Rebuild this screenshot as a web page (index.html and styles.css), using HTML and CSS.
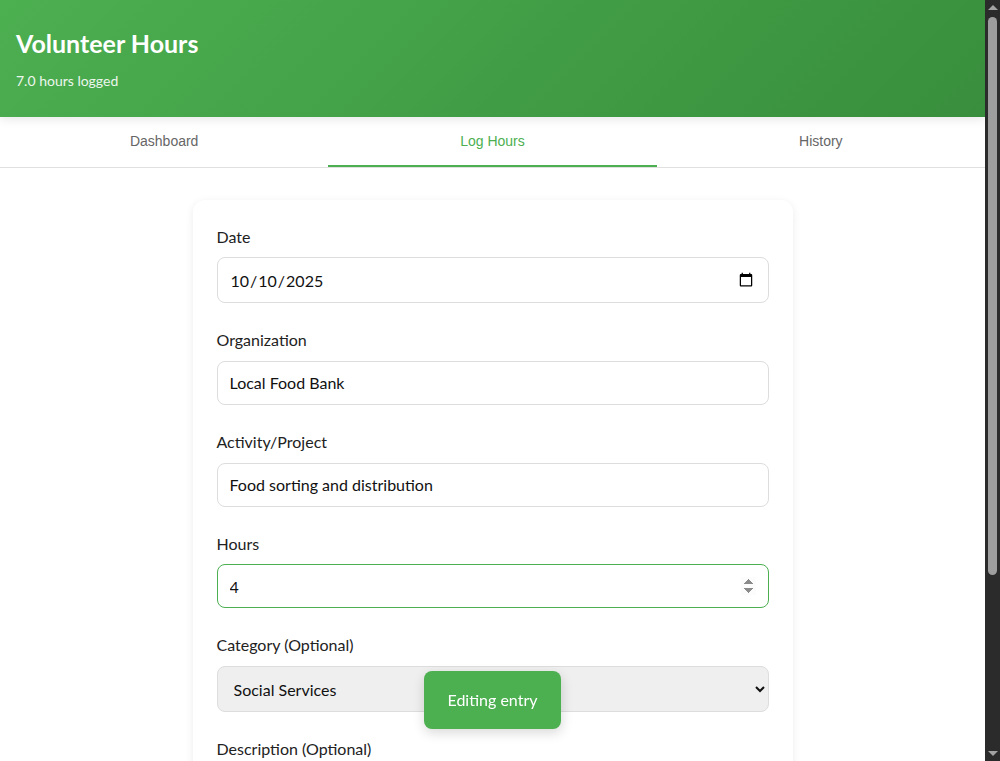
FILE: index.html
```html
<!DOCTYPE html>
<html lang="en">
<head>
<meta charset="utf-8">
<title>Volunteer Hours</title>
<link rel="stylesheet" href="styles.css">
</head>
<body>
<div class="page">
  <header class="app-header">
    <h1 class="app-title">Volunteer Hours</h1>
    <p class="app-subtitle">7.0 hours logged</p>
  </header>
  <nav class="tabs">
    <button class="tab">Dashboard</button>
    <button class="tab active">Log Hours</button>
    <button class="tab">History</button>
  </nav>
  <main class="main">
    <form class="card">
      <div class="form-group">
        <label class="label" for="date">Date</label>
        <input class="field field-date" type="date" id="date" value="2025-10-10">
      </div>
      <div class="form-group">
        <label class="label" for="org">Organization</label>
        <input class="field" type="text" id="org" value="Local Food Bank">
      </div>
      <div class="form-group">
        <label class="label" for="act">Activity/Project</label>
        <input class="field" type="text" id="act" value="Food sorting and distribution">
      </div>
      <div class="form-group">
        <label class="label" for="hours">Hours</label>
        <input class="field" type="number" id="hours" value="4" step="0.5" autofocus>
      </div>
      <div class="form-group">
        <label class="label" for="cat">Category (Optional)</label>
        <select class="field field-select" id="cat">
          <option>Social Services</option>
          <option>Education</option>
          <option>Environment</option>
        </select>
      </div>
      <div class="form-group">
        <label class="label" for="desc">Description (Optional)</label>
        <textarea class="field field-area" id="desc"></textarea>
      </div>
      <button class="submit" type="button">Update Entry</button>
    </form>
  </main>
</div>
<div class="toast">Editing entry</div>
<div class="scrollbar" aria-hidden="true">
  <span class="sb-arrow sb-up"></span>
  <span class="sb-thumb"></span>
  <span class="sb-arrow sb-down"></span>
</div>
</body>
</html>
```
FILE: styles.css
```css
* { box-sizing: border-box; }
html, body { margin: 0; padding: 0; }
body {
  font-family: Lato, "Open Sans", sans-serif;
  line-height: 1.6;
  color: #333;
  background: #fff;
}
.page {
  margin-right: 15px;
}
.app-header {
  position: relative;
  z-index: 2;
  background: linear-gradient(135deg, #4CAF50 0%, #388E3C 100%);
  color: #fff;
  padding: 24px 16px;
  box-shadow: 0 2px 10px rgba(0,0,0,0.1);
}
.app-title {
  margin: 0 0 8px;
  font-size: 25px;
  font-weight: 700;
  line-height: 38.4px;
}
.app-subtitle {
  margin: 0;
  font-size: 14px;
  opacity: 0.9;
}
.tabs {
  display: flex;
  background: #fff;
  border-bottom: 1px solid #e0e0e0;
}
.tab {
  flex: 1;
  background: none;
  border: none;
  border-bottom: 2px solid transparent;
  padding: 16px;
  font-family: "Liberation Sans", Arial, sans-serif;
  font-size: 14px;
  line-height: 16px;
  color: #666;
  cursor: pointer;
}
.tab.active {
  color: #4CAF50;
  border-bottom-color: #4CAF50;
}
.main {
  padding: 32px 16px;
}
.card {
  max-width: 600px;
  margin: 0 auto;
  background: #fff;
  border-radius: 12px;
  padding: 24px;
  box-shadow: 0 2px 8px rgba(0,0,0,0.08);
}
.form-group { margin-bottom: 24px; }
.label {
  display: block;
  margin-bottom: 8px;
  font-size: 16px;
  font-weight: 400;
  color: #222;
}
.field {
  display: block;
  width: 100%;
  height: 44px;
  padding: 12px;
  border: 1px solid #ddd;
  border-radius: 8px;
  font-family: inherit;
  font-size: 16px;
  color: #111;
}
.field:focus {
  outline: none;
  border-color: #4CAF50;
}
.field-date { height: 46px; }
.field-select { height: 46px; padding: 12px; }
.field-area { height: 100px; resize: vertical; }
.submit {
  width: 100%;
  padding: 14px;
  background: #4CAF50;
  color: #fff;
  border: none;
  border-radius: 8px;
  font-family: inherit;
  font-size: 16px;
  font-weight: 500;
}
.toast {
  position: fixed;
  left: calc((100% - 15px) / 2);
  bottom: 32px;
  transform: translateX(-50%);
  background: #4CAF50;
  color: #fff;
  padding: 16px 24px;
  border-radius: 8px;
  font-size: 16px;
  box-shadow: 0 4px 12px rgba(0,0,0,0.15);
  z-index: 10;
}
.scrollbar {
  position: fixed;
  top: 0;
  right: 0;
  width: 15px;
  height: 100vh;
  background: #2b2b2b;
  display: flex;
  flex-direction: column;
  align-items: center;
  z-index: 20;
}
.sb-arrow {
  width: 0;
  height: 0;
  border-left: 5px solid transparent;
  border-right: 5px solid transparent;
}
.sb-up {
  margin-top: 5px;
  border-bottom: 5px solid #a3a3a3;
}
.sb-down {
  margin-top: auto;
  margin-bottom: 5px;
  border-top: 5px solid #a3a3a3;
}
.sb-thumb {
  margin-top: 7px;
  width: 9px;
  height: 558px;
  border-radius: 5px;
  background: #9e9e9e;
}
```
